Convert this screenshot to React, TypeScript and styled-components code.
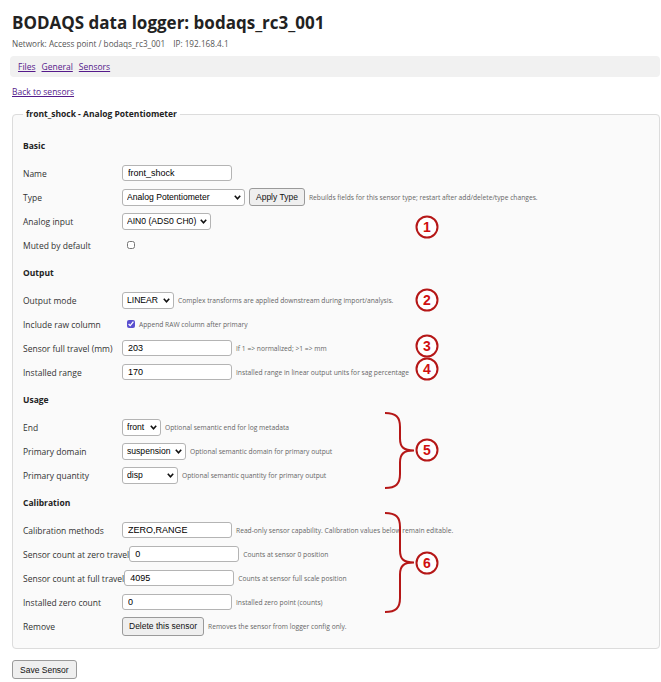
import styled, { createGlobalStyle } from 'styled-components';

const GlobalStyle = createGlobalStyle`
  html, body {
    margin: 0;
    padding: 0;
    background: #ffffff;
  }
  body {
    font-family: 'Open Sans', 'Noto Sans', 'DejaVu Sans', sans-serif;
    color: #222;
  }
`;

const Page = styled.div`
  position: relative;
  width: 661px;
  min-height: 682px;
  box-sizing: border-box;
  padding: 11px 1px 0 10px;
`;

const Title = styled.h1`
  margin: 0 0 0 2px;
  font-size: 17px;
  line-height: 24px;
  font-weight: 700;
  color: #222;
`;

const Meta = styled.div`
  margin: 3px 0 0 2px;
  font-size: 8.2px;
  line-height: 12px;
  color: #555;

  & > span + span {
    margin-left: 8px;
  }
`;

const NavBar = styled.nav`
  margin-top: 6px;
  height: 21px;
  display: flex;
  align-items: center;
  gap: 6px;
  padding: 0 8px;
  background: #f1f1f1;
  border-radius: 4px;
`;

const Link = styled.a`
  font-size: 8.5px;
  line-height: 12px;
  color: #551a8b;
  text-decoration: underline;
  cursor: pointer;
`;

const BackLink = styled(Link)`
  display: block;
  margin: 9px 0 0 2px;
`;

const Fieldset = styled.fieldset`
  margin: 10px 0 0 2px;
  padding: 0 10px 10px 10px;
  border: 1px solid #dcdcdc;
  border-radius: 4px;
  background: #fafafa;
  min-width: 0;
`;

const Legend = styled.legend`
  padding: 0 3px;
  margin-left: 0;
  font-size: 8.5px;
  line-height: 12px;
  font-weight: 700;
  color: #222;
`;

const SectionTitle = styled.div<{ $first?: boolean }>`
  margin-top: ${(p) => (p.$first ? '20px' : '10px')};
  margin-bottom: 9px;
  font-size: 8.5px;
  line-height: 12px;
  font-weight: 700;
  color: #222;
`;

const Row = styled.div`
  display: flex;
  align-items: center;
  height: 24px;
`;

const Label = styled.label`
  flex: none;
  min-width: 99px;
  font-size: 8.5px;
  color: #333;
  white-space: nowrap;
`;

const TextInput = styled.input`
  box-sizing: border-box;
  width: 110px;
  height: 16px;
  padding: 0 5px;
  border: 1px solid #b4b4b4;
  border-radius: 3px;
  background: #fff;
  font-family: 'Liberation Sans', Arial, sans-serif;
  font-size: 9px;
  color: #000;
  outline: none;
`;

const SelectBox = styled.span`
  position: relative;
  display: inline-flex;
  flex: none;
`;

const Select = styled.select<{ $w: number }>`
  box-sizing: border-box;
  width: ${(p) => p.$w}px;
  height: 17px;
  padding: 0 12px 0 4px;
  appearance: none;
  -webkit-appearance: none;
  border: 1px solid #b4b4b4;
  border-radius: 3px;
  background: #fff;
  font-family: 'Liberation Sans', Arial, sans-serif;
  font-size: 8.6px;
  color: #000;
  outline: none;
`;

const Chevron = styled.svg`
  position: absolute;
  right: 4px;
  top: 6px;
  width: 7px;
  height: 5px;
  pointer-events: none;
`;

const Button = styled.button<{ $gap?: boolean }>`
  box-sizing: border-box;
  height: 18px;
  margin-left: ${(p) => (p.$gap ? '4px' : '0')};
  padding: 0 6px;
  border: 1px solid #9a9a9a;
  border-radius: 3px;
  background: #efefef;
  font-family: 'Liberation Sans', Arial, sans-serif;
  font-size: 8.5px;
  color: #111;
`;

const Check = styled.input`
  width: 8px;
  height: 8px;
  margin: 0 0 0 5px;
  accent-color: #5a4fcf;
`;

const Hint = styled.span`
  margin-left: 4px;
  font-size: 6.7px;
  color: #666;
  white-space: nowrap;
`;

const SaveButton = styled(Button)`
  display: block;
  margin: 11px 0 0 2px;
  height: 19px;
  padding: 0 7px;
`;

const Overlay = styled.svg`
  position: absolute;
  left: 0;
  top: 0;
  width: 661px;
  height: 682px;
  pointer-events: none;
`;

type Field = {
  label: string;
  control: React.ReactNode;
  hint?: string;
};

const Dropdown = ({ width, value }: { width: number; value: string }) => (
  <SelectBox>
    <Select $w={width} defaultValue={value}>
      <option value={value}>{value}</option>
    </Select>
    <Chevron viewBox="0 0 7 5">
      <polyline points="0.8,0.8 3.5,3.8 6.2,0.8" fill="none" stroke="#111" strokeWidth="1.6" />
    </Chevron>
  </SelectBox>
);

const Section = ({ title, first, fields }: { title: string; first?: boolean; fields: Field[] }) => (
  <>
    <SectionTitle $first={first}>{title}</SectionTitle>
    {fields.map((f) => (
      <Row key={f.label}>
        <Label>{f.label}</Label>
        {f.control}
        {f.hint && <Hint>{f.hint}</Hint>}
      </Row>
    ))}
  </>
);

const markers = [
  { n: '1', y: 227 },
  { n: '2', y: 300 },
  { n: '3', y: 346 },
  { n: '4', y: 369 },
  { n: '5', y: 450 },
  { n: '6', y: 563 },
];

const brace = (top: number, bottom: number) => {
  const mid = (top + bottom) / 2;
  return `M385 ${top} C396 ${top} 400 ${top + 4} 400 ${top + 14} L400 ${mid - 12} C400 ${mid - 3} 404 ${mid} 414 ${mid} C404 ${mid} 400 ${mid + 3} 400 ${mid + 12} L400 ${bottom - 14} C400 ${bottom - 4} 396 ${bottom} 385 ${bottom}`;
};

const Annotations = () => (
  <Overlay viewBox="0 0 661 682">
    <path d={brace(413, 488)} fill="none" stroke="#b51717" strokeWidth="2" />
    <path d={brace(513, 612)} fill="none" stroke="#b51717" strokeWidth="2" />
    {markers.map((m) => (
      <g key={m.n}>
        <circle cx="427" cy={m.y} r="10.5" fill="#fff" stroke="#b51717" strokeWidth="2" />
        <text
          x="427"
          y={m.y + 5}
          textAnchor="middle"
          fontFamily="'Liberation Sans', Arial, sans-serif"
          fontWeight="700"
          fontSize="14"
          fill="#d01010"
        >
          {m.n}
        </text>
      </g>
    ))}
  </Overlay>
);

const App = () => {
  return (
    <Page>
      <GlobalStyle />
      <Title>BODAQS data logger: bodaqs_rc3_001</Title>
      <Meta>
        <span>Network: Access point / bodaqs_rc3_001</span>
        <span>IP: 192.168.4.1</span>
      </Meta>
      <NavBar>
        <Link>Files</Link>
        <Link>General</Link>
        <Link>Sensors</Link>
      </NavBar>
      <BackLink>Back to sensors</BackLink>

      <Fieldset>
        <Legend>front_shock - Analog Potentiometer</Legend>
        <Section
          title="Basic"
          first
          fields={[
            { label: 'Name', control: <TextInput defaultValue="front_shock" /> },
            {
              label: 'Type',
              control: (
                <>
                  <Dropdown width={123} value="Analog Potentiometer" />
                  <Button $gap>Apply Type</Button>
                </>
              ),
              hint: 'Rebuilds fields for this sensor type; restart after add/delete/type changes.',
            },
            { label: 'Analog input', control: <Dropdown width={89} value="AIN0 (ADS0 CH0)" /> },
            { label: 'Muted by default', control: <Check type="checkbox" /> },
          ]}
        />
        <Section
          title="Output"
          fields={[
            {
              label: 'Output mode',
              control: <Dropdown width={52} value="LINEAR" />,
              hint: 'Complex transforms are applied downstream during import/analysis.',
            },
            {
              label: 'Include raw column',
              control: <Check type="checkbox" defaultChecked />,
              hint: 'Append RAW column after primary',
            },
            { label: 'Sensor full travel (mm)', control: <TextInput defaultValue="203" />, hint: 'If 1 => normalized; >1 => mm' },
            {
              label: 'Installed range',
              control: <TextInput defaultValue="170" />,
              hint: 'Installed range in linear output units for sag percentage',
            },
          ]}
        />
        <Section
          title="Usage"
          fields={[
            {
              label: 'End',
              control: <Dropdown width={39} value="front" />,
              hint: 'Optional semantic end for log metadata',
            },
            {
              label: 'Primary domain',
              control: <Dropdown width={64} value="suspension" />,
              hint: 'Optional semantic domain for primary output',
            },
            {
              label: 'Primary quantity',
              control: <Dropdown width={56} value="disp" />,
              hint: 'Optional semantic quantity for primary output',
            },
          ]}
        />
        <Section
          title="Calibration"
          fields={[
            {
              label: 'Calibration methods',
              control: <TextInput defaultValue="ZERO,RANGE" readOnly />,
              hint: 'Read-only sensor capability. Calibration values below remain editable.',
            },
            { label: 'Sensor count at zero travel', control: <TextInput defaultValue="0" />, hint: 'Counts at sensor 0 position' },
            {
              label: 'Sensor count at full travel',
              control: <TextInput defaultValue="4095" />,
              hint: 'Counts at sensor full scale position',
            },
            { label: 'Installed zero count', control: <TextInput defaultValue="0" />, hint: 'Installed zero point (counts)' },
            {
              label: 'Remove',
              control: <Button style={{ height: 19 }}>Delete this sensor</Button>,
              hint: 'Removes the sensor from logger config only.',
            },
          ]}
        />
      </Fieldset>
      <SaveButton>Save Sensor</SaveButton>
      <Annotations />
    </Page>
  );
};

export default App;
